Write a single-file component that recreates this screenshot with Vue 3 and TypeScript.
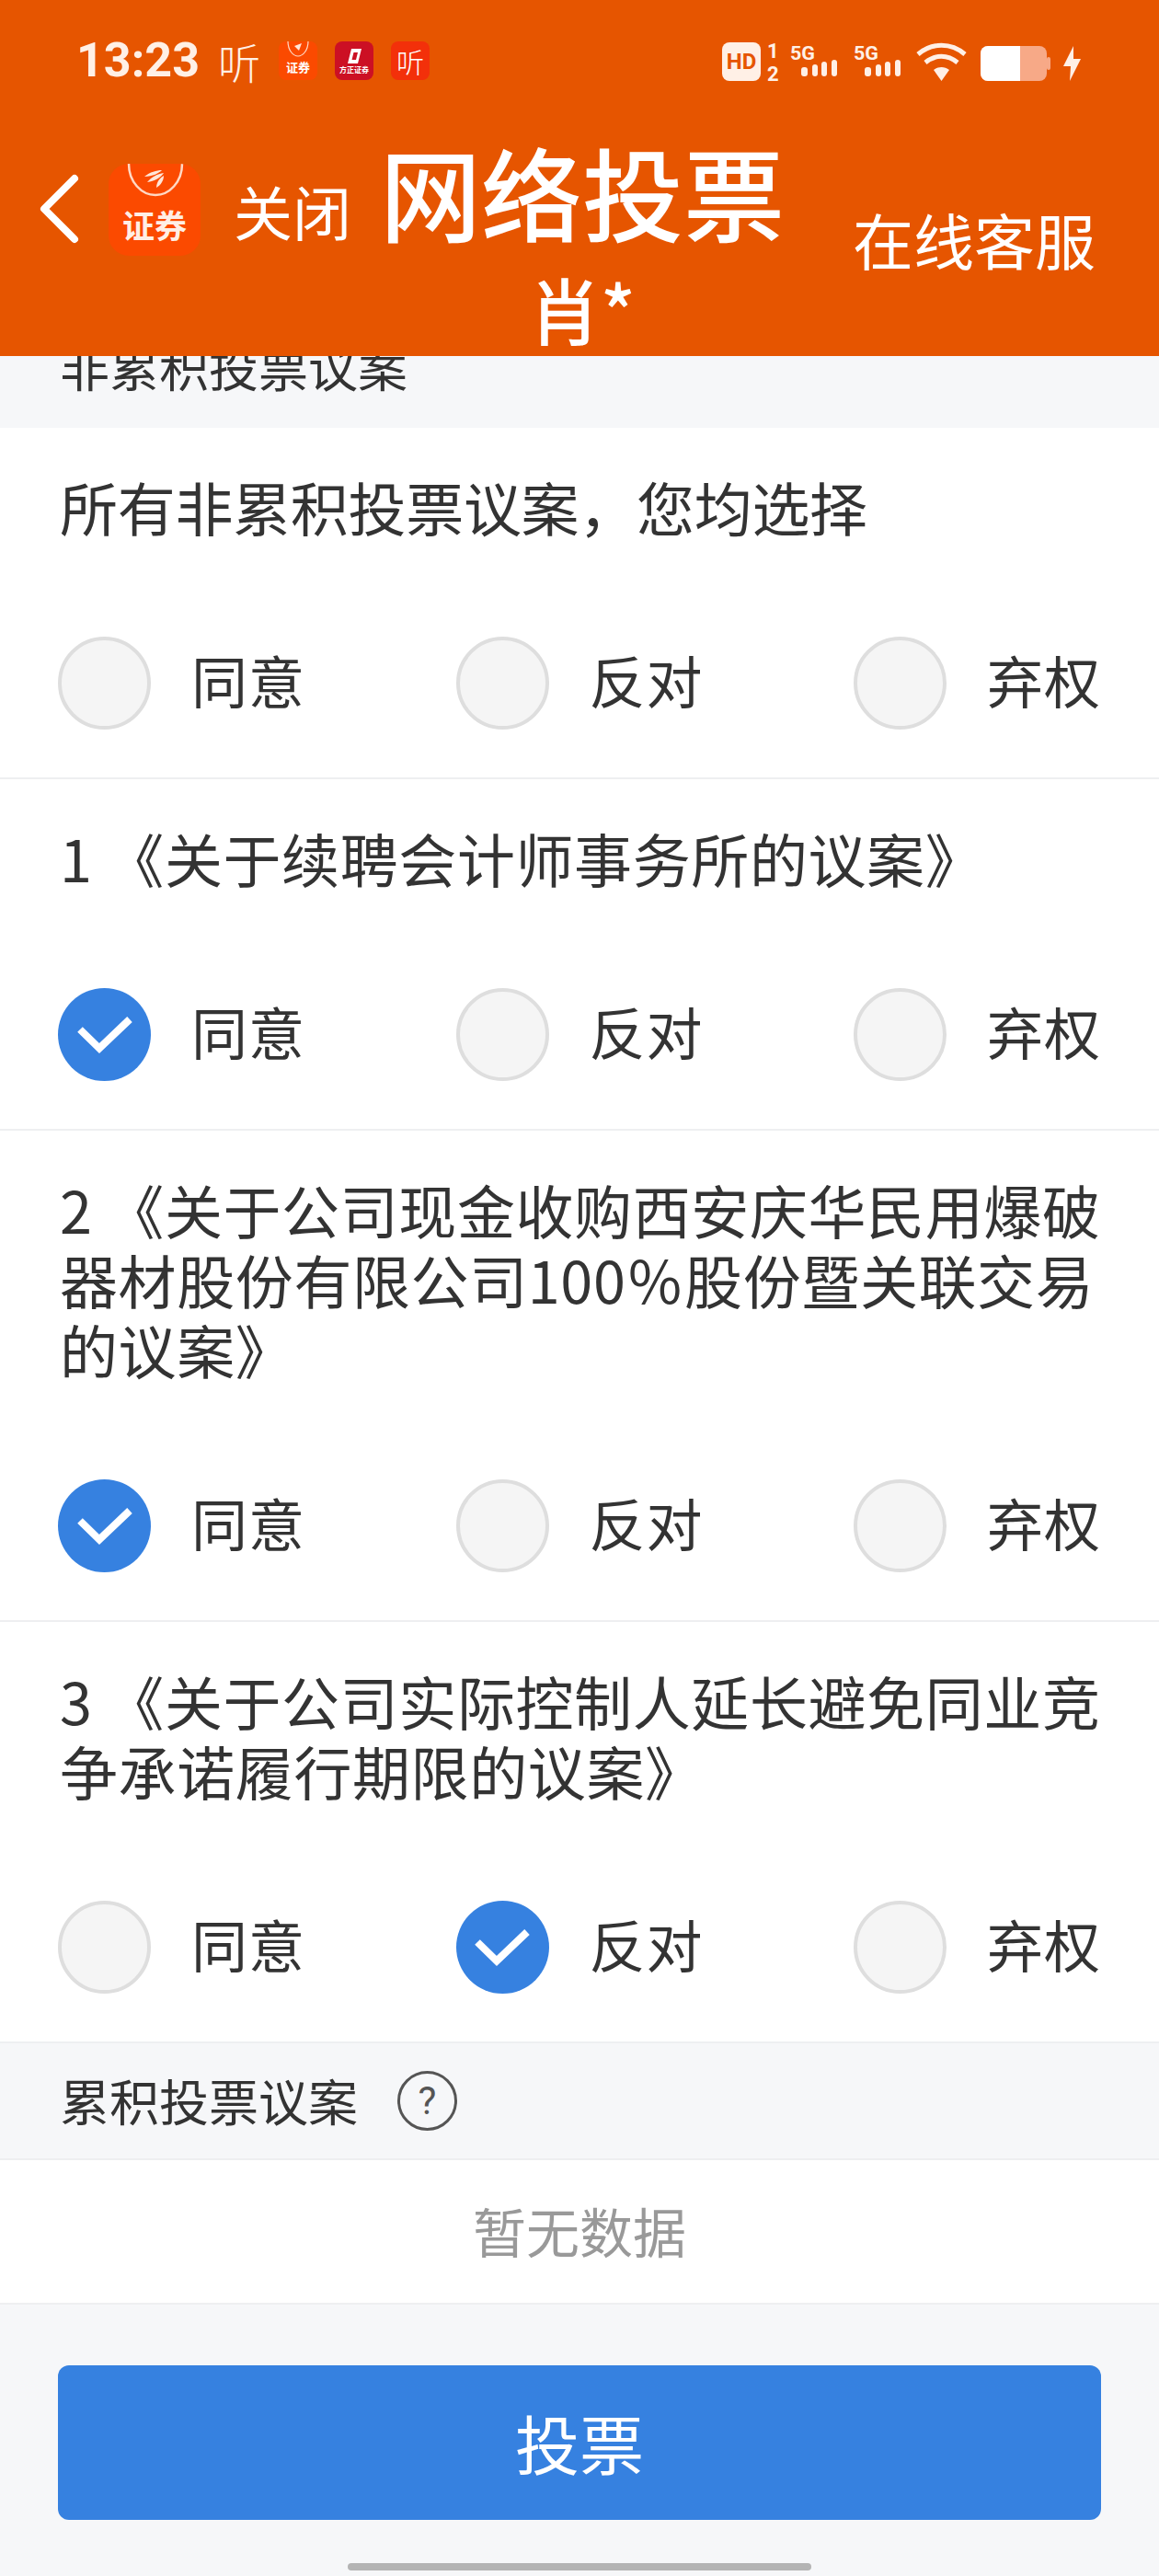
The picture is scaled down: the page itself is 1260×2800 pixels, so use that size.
<template>
  <div class="page">
    <header class="top">
      <div class="status">
        <div class="status-left">
          <span class="time">13:23</span>
          <span class="ting">听</span>
          <span class="tile tile-a">
            <svg class="tile-arc" width="42" height="20" viewBox="0 0 42 20">
              <path d="M10 0 C10 10 16 16 21 16 C26 16 32 10 32 0" fill="none" stroke="#ffd9c4" stroke-width="1.2" />
              <path d="M17 5 L25 2 L22 10 Z" fill="#ffe6d8" />
            </svg>
            <em>证券</em>
          </span>
          <span class="tile tile-b">
            <svg width="18" height="18" viewBox="0 0 18 18">
              <path d="M6 1 H17 L13 17 H2 Z M8.5 5 L6.5 13 H11 L13 5 Z" fill="#fff" fill-rule="evenodd" />
            </svg>
            <em>方正证券</em>
          </span>
          <span class="tile tile-c">听</span>
        </div>
        <svg class="status-right" width="400" height="48" viewBox="0 0 400 48">
          <rect x="1" y="3" width="42" height="42" rx="8" fill="#fff0e6" />
          <text x="22" y="32" class="hd">HD</text>
          <text x="50" y="20" class="sim">1</text>
          <text x="50" y="45" class="sim">2</text>
          <text x="75" y="22" class="five" textLength="27" lengthAdjust="spacingAndGlyphs">5G</text>
          <g fill="#fff0e6">
            <rect x="87" y="30" width="7" height="10" rx="3" />
            <rect x="99" y="27" width="6" height="13" rx="3" />
            <rect x="109" y="24" width="6" height="16" rx="3" />
            <rect x="120" y="22" width="6" height="18" rx="3" />
          </g>
          <text x="144" y="22" class="five" textLength="27" lengthAdjust="spacingAndGlyphs">5G</text>
          <g fill="#fff0e6">
            <rect x="156" y="30" width="7" height="10" rx="3" />
            <rect x="168" y="27" width="6" height="13" rx="3" />
            <rect x="178" y="24" width="6" height="16" rx="3" />
            <rect x="189" y="22" width="6" height="18" rx="3" />
          </g>
          <g fill="none" stroke="#fff0e6" stroke-width="5">
            <path d="M214 16 C229 3 250 3 265 16" />
            <path d="M222 25 C233 16 246 16 257 25" />
          </g>
          <path d="M231 33 C236 29 243 29 248 33 L239.5 45 Z" fill="#fff0e6" />
          <rect x="282" y="7" width="72" height="38" rx="8" fill="#f7a987" />
          <path d="M290 7 H325 V45 H290 A8 8 0 0 1 282 37 V15 A8 8 0 0 1 290 7 Z" fill="#fff" />
          <rect x="354" y="19" width="4" height="14" rx="2" fill="#f7a987" />
          <path d="M383 7 L372 29 H380 L379 45 L391 21 H383 Z" fill="#fff0e6" />
        </svg>
      </div>

      <div class="nav">
        <div class="nav-left">
          <svg class="back" width="46" height="78" viewBox="0 0 46 78">
            <path d="M39 5 L6 38 L39 71" fill="none" stroke="#fff" stroke-width="8" stroke-linecap="round" stroke-linejoin="round" />
          </svg>
          <span class="logo">
            <svg class="logo-arc" width="100" height="44" viewBox="0 0 100 44">
              <path d="M22 0 C22 20 36 34 51 34 C66 34 80 20 80 0" fill="none" stroke="#ffd9c4" stroke-width="2.5" />
              <path d="M39 14 C45 9 52 7 58 7 C55 10 48 14 39 14 Z" fill="#ffe6d8" />
              <path d="M42 20 C47 14 53 11 60 10 C57 15 50 19 42 20 Z" fill="#ffe6d8" />
              <path d="M52 26 C52 20 56 15 60 13 C60 18 57 23 52 26 Z" fill="#ffe6d8" />
            </svg>
            <b>证券</b>
          </span>
          <span class="close">关闭</span>
        </div>
        <div class="nav-title">
          <h1>网络投票</h1>
          <p>肖*</p>
        </div>
        <span class="nav-right">在线客服</span>
      </div>
    </header>

    <div class="section-title clipped">
      <span>非累积投票议案</span>
    </div>

    <div v-for="(item, idx) in items" :key="item.text" class="proposal">
      <p class="question" :class="{ summary: idx === 0 }">{{ item.text }}</p>
      <div class="options">
        <div v-for="(opt, i) in options" :key="opt" class="option">
          <span class="radio" :class="{ on: item.picked === i }">
            <svg v-if="item.picked === i" width="60" height="42" viewBox="0 0 60 42">
              <path d="M3 15 L24 35.5 L57 4" fill="none" stroke="#fff" stroke-width="8" />
            </svg>
          </span>
          <span class="label">{{ opt }}</span>
        </div>
      </div>
    </div>

    <div class="section-title">
      <span class="cum-title">累积投票议案</span>
      <span class="help">?</span>
    </div>
    <div class="empty">暂无数据</div>

    <div class="footer">
      <button class="vote" type="button">投票</button>
    </div>
    <div class="home-bar"></div>
  </div>
</template>

<script setup lang="ts">
interface Proposal {
  text: string;
  picked: number;
}

const options = ['同意', '反对', '弃权'];

const items: Proposal[] = [
  { text: '所有非累积投票议案，您均选择', picked: -1 },
  { text: '1 《关于续聘会计师事务所的议案》', picked: 0 },
  { text: '2 《关于公司现金收购西安庆华民用爆破器材股份有限公司100％股份暨关联交易的议案》', picked: 0 },
  { text: '3 《关于公司实际控制人延长避免同业竞争承诺履行期限的议案》', picked: 1 },
];
</script>

<style>
html,
body {
  margin: 0;
  background: #f6f7f9;
}
</style>

<style scoped>
.page {
  width: 1260px;
  height: 2800px;
  overflow: hidden;
  position: relative;
  background: #f6f7f9;
  font-family: "Noto Sans CJK SC", "Noto Sans", sans-serif;
  color: #333;
}

.top {
  height: 387px;
  background: #e65500;
  color: #fff;
}

.status {
  display: flex;
  justify-content: space-between;
  align-items: center;
  height: 48px;
  padding: 42px 0 0 83px;
}

.status-left {
  display: flex;
  align-items: center;
}

.time {
  font-family: Roboto, sans-serif;
  font-size: 52px;
  font-weight: 700;
  line-height: 48px;
  color: #fff0e6;
}

.ting {
  margin: 0 20px;
  font-size: 46px;
  font-weight: 300;
  line-height: 48px;
  color: #fff0e6;
}

.tile {
  position: relative;
  display: flex;
  flex-direction: column;
  align-items: center;
  justify-content: flex-end;
  width: 42px;
  height: 42px;
  margin-right: 19px;
  border-radius: 8px;
  overflow: hidden;
  color: #fff;
}

.tile em {
  font-style: normal;
  white-space: nowrap;
}

.tile-a {
  background: #fb4a00;
}

.tile-a em {
  font-size: 13px;
  font-weight: 700;
  line-height: 20px;
  padding-bottom: 4px;
}

.tile-arc {
  position: absolute;
  top: 0;
  left: 0;
}

.tile-b {
  background: #cc1024;
  justify-content: center;
}

.tile-b em {
  font-size: 8px;
  line-height: 11px;
  font-weight: 700;
}

.tile-c {
  background: #f3300a;
  justify-content: center;
  overflow: visible;
  font-size: 30px;
  font-weight: 300;
  line-height: 42px;
}

.status-right {
  flex-shrink: 0;
  margin-left: auto;
  margin-top: 2px;
  padding-right: 76px;
}

.hd {
  font: 700 24px Roboto, sans-serif;
  text-anchor: middle;
  fill: #e65500;
}

.sim {
  font: 700 22px Roboto, sans-serif;
  fill: #fff0e6;
}

.five {
  font: 700 21px Roboto, sans-serif;
  fill: #fff0e6;
}

.nav {
  display: grid;
  grid-template-columns: 1fr auto 1fr;
  padding-left: 6px;
  margin-top: 60px;
}

.nav-left {
  display: flex;
  align-items: center;
  align-self: start;
  height: 156px;
  padding-left: 36px;
}

.back {
  flex-shrink: 0;
}

.logo {
  position: relative;
  display: flex;
  align-items: flex-end;
  justify-content: center;
  flex-shrink: 0;
  width: 100px;
  height: 100px;
  margin-left: 30px;
  border-radius: 22px;
  background: #fb4a00;
  overflow: hidden;
}

.logo-arc {
  position: absolute;
  top: 0;
  left: 0;
}

.logo b {
  font-size: 35px;
  line-height: 40px;
  padding-bottom: 14px;
  color: #ffeee5;
  white-space: nowrap;
}

.close {
  margin-left: 36px;
  font-size: 64px;
  line-height: 80px;
  white-space: nowrap;
}

.nav-title {
  display: flex;
  flex-direction: column;
  align-items: center;
  margin-top: -8px;
}

.nav-title h1 {
  margin: 0;
  font-size: 110px;
  font-weight: 500;
  line-height: 130px;
  white-space: nowrap;
}

.nav-title p {
  margin: 18px 0 0;
  font-size: 78px;
  font-weight: 500;
  line-height: 90px;
  white-space: nowrap;
}

.nav-right {
  justify-self: end;
  align-self: start;
  margin: 64px 69px 0 0;
  font-size: 66px;
  line-height: 90px;
  white-space: nowrap;
}

.section-title {
  display: flex;
  align-items: center;
  gap: 43px;
  height: 127px;
  padding-left: 65px;
  box-sizing: border-box;
  border-bottom: 2px solid #eeeff1;
  font-size: 54px;
  white-space: nowrap;
}

.section-title.clipped {
  height: 78px;
  overflow: hidden;
  align-items: flex-start;
  border-bottom: none;
}

.section-title.clipped span {
  margin-top: -29px;
  line-height: 80px;
}

.cum-title {
  margin-top: -3px;
}

.help {
  display: flex;
  align-items: center;
  justify-content: center;
  width: 59px;
  height: 59px;
  border: 3px solid #555;
  border-radius: 50%;
  font-family: Roboto, sans-serif;
  font-size: 42px;
  line-height: 1;
  color: #555;
}

.proposal {
  padding: 47px 50px 52px 65px;
  background: #fff;
  border-bottom: 2px solid #eeeff1;
}

.question {
  margin: 0 0 104px;
  font-size: 63px;
  line-height: 76px;
  letter-spacing: 0.6px;
}

.question.summary {
  letter-spacing: -0.3px;
}

.options {
  display: flex;
  margin-left: -2px;
}

.option {
  display: flex;
  align-items: center;
  gap: 44px;
  width: 432.5px;
}

.option:last-child {
  width: auto;
}

.radio {
  display: flex;
  align-items: center;
  justify-content: center;
  flex-shrink: 0;
  box-sizing: border-box;
  width: 101px;
  height: 101px;
  border: 4px solid #dedede;
  border-radius: 50%;
  background: #f5f5f5;
}

.radio.on {
  border: none;
  background: #3681e0;
}

.label {
  margin-top: -9px;
  font-size: 61px;
  line-height: 75px;
  letter-spacing: 1px;
}

.empty {
  height: 157px;
  box-sizing: border-box;
  display: flex;
  align-items: center;
  justify-content: center;
  padding-bottom: 3px;
  background: #fff;
  border-bottom: 2px solid #eeeff1;
  font-size: 58px;
  color: #999;
}

.footer {
  padding: 66px 63px 0;
}

.vote {
  display: block;
  width: 100%;
  height: 168px;
  padding: 0 0 2px;
  border: none;
  border-radius: 12px;
  background: #3681e0;
  color: #fff;
  font: inherit;
  font-size: 70px;
}

.home-bar {
  position: absolute;
  left: 378px;
  bottom: 6px;
  width: 504px;
  height: 8px;
  border-radius: 4px;
  background: #b4b4b4;
}
</style>
